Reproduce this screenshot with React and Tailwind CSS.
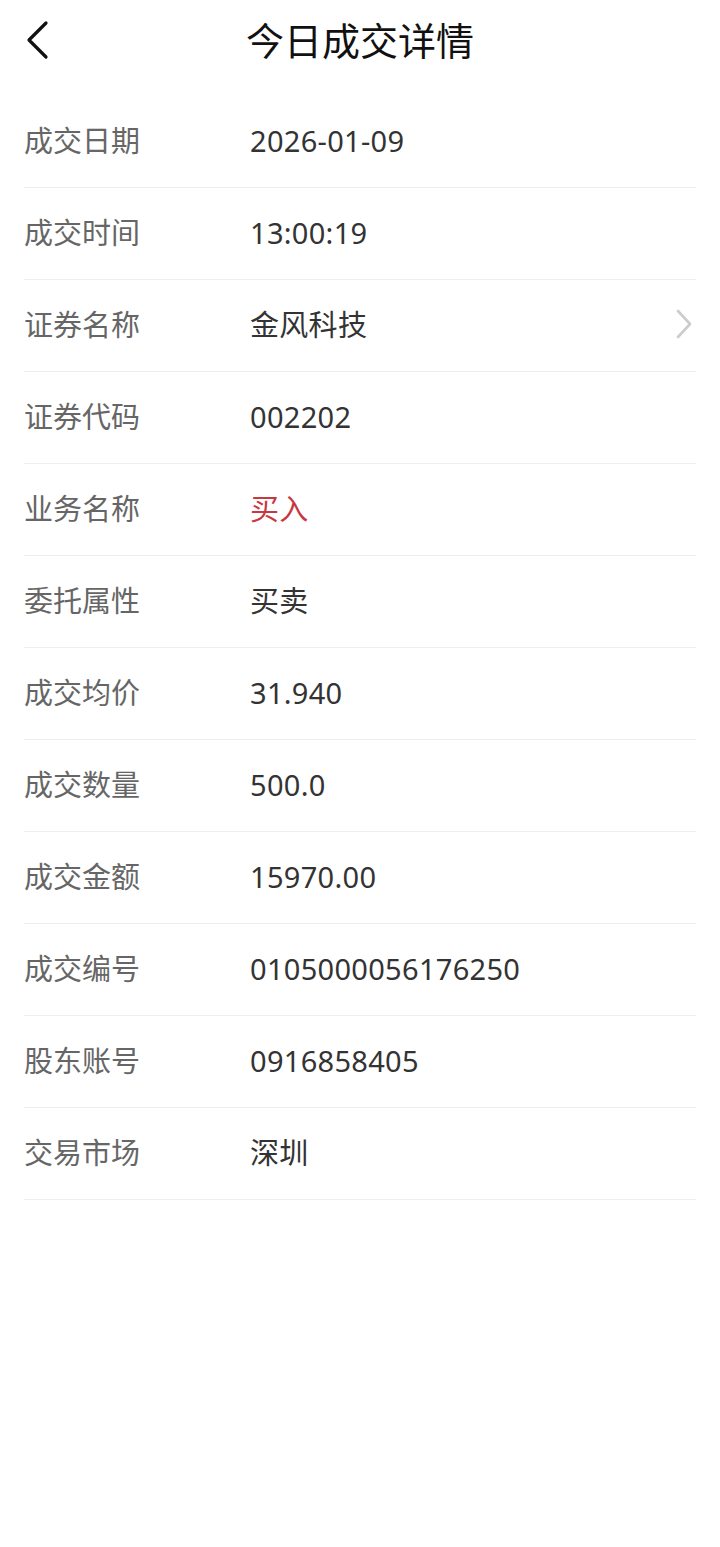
import React from "react";

const rows = [
  ["成交日期", "2026-01-09"],
  ["成交时间", "13:00:19"],
  ["证券名称", "金风科技", "arrow"],
  ["证券代码", "002202"],
  ["业务名称", "买入", "red"],
  ["委托属性", "买卖"],
  ["成交均价", "31.940"],
  ["成交数量", "500.0"],
  ["成交金额", "15970.00"],
  ["成交编号", "0105000056176250"],
  ["股东账号", "0916858405"],
  ["交易市场", "深圳"],
];

export default function App() {
  return (
    <div
      className="w-[720px] min-h-[1547px] bg-white"
      style={{ fontFamily: '"Noto Sans", "Noto Sans CJK SC", sans-serif' }}
    >
      <div className="relative h-[80px] flex items-center justify-center">
        <svg
          className="absolute left-[24px] top-[20px]"
          width="26"
          height="40"
          viewBox="0 0 26 40"
          fill="none"
        >
          <path d="M22 3 L5 20 L22 37" stroke="#111" strokeWidth="3.2" strokeLinecap="round" strokeLinejoin="round" />
        </svg>
        <div className="text-[38px] text-[#111] leading-none">今日成交详情</div>
      </div>
      <div className="mt-[16px] mx-[24px]">
        {rows.map(([label, value, kind]) => (
          <div
            key={label}
            className="h-[92px] pb-[3px] flex items-center border-b border-[#eeeeee]"
          >
            <div className="w-[226px] text-[29px] leading-none text-[#666666]">{label}</div>
            <div
              className={
                "flex-1 text-[29px] leading-none tracking-[0.3px] " +
                (kind === "red" ? "text-[#c8383f]" : "text-[#333333]")
              }
            >
              {value}
            </div>
            {kind === "arrow" && (
              <svg width="20" height="32" viewBox="0 0 20 32" fill="none" className="mr-[2px]">
                <path d="M4 3 L16 16 L4 29" stroke="#cccccc" strokeWidth="2.6" strokeLinecap="round" strokeLinejoin="round" />
              </svg>
            )}
          </div>
        ))}
      </div>
    </div>
  );
}
